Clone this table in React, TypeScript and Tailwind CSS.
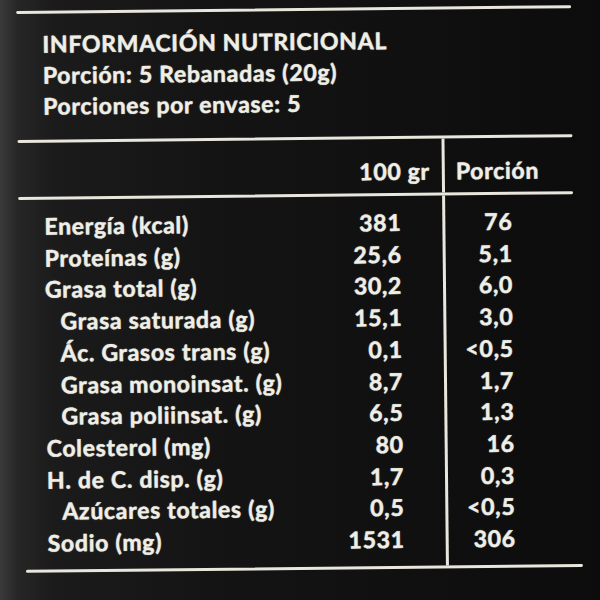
const rows: { label: string; a: string; b: string; sub?: boolean }[] = [
  { label: "Energía (kcal)", a: "381", b: "76" },
  { label: "Proteínas (g)", a: "25,6", b: "5,1" },
  { label: "Grasa total (g)", a: "30,2", b: "6,0" },
  { label: "Grasa saturada (g)", a: "15,1", b: "3,0", sub: true },
  { label: "Ác. Grasos trans (g)", a: "0,1", b: "<0,5", sub: true },
  { label: "Grasa monoinsat. (g)", a: "8,7", b: "1,7", sub: true },
  { label: "Grasa poliinsat. (g)", a: "6,5", b: "1,3", sub: true },
  { label: "Colesterol (mg)", a: "80", b: "16" },
  { label: "H. de C. disp. (g)", a: "1,7", b: "0,3" },
  { label: "Azúcares totales (g)", a: "0,5", b: "<0,5", sub: true },
  { label: "Sodio (mg)", a: "1531", b: "306" },
];

function Rule({ className = "" }: { className?: string }) {
  return <div className={`h-[3px] rounded-full bg-[#e9e7dd] ${className}`} />;
}

export default function App() {
  return (
    <div className="h-[600px] w-[600px] overflow-hidden bg-[linear-gradient(90deg,#3a3a3a_0%,#262626_3%,#1b1b1b_9%,#141414_35%,#0c0c0c_100%)] font-['Lato','Noto_Sans',sans-serif] font-bold tracking-[0.7px] text-[#f0efe7] [-webkit-text-stroke:0.4px_#f0efe7] [text-shadow:0_0_1.5px_rgba(255,255,240,0.45)]">
      {/* the label is photographed slightly tilted */}
      <div className="rotate-[-0.6deg] pl-[19px] pr-[26px] pt-[8px]">
        <Rule />

        <div className="pl-[26px] pt-[15px] text-[23px] leading-[31px]">
          <div>INFORMACIÓN NUTRICIONAL</div>
          <div>Porción: 5 Rebanadas (20g)</div>
          <div>Porciones por envase: 5</div>
        </div>

        <div className="mt-[18px]">
          <Rule />
          <div className="flex text-[23px] leading-[31px]">
            <div className="w-[424px] pb-[6px] pr-[12px] pt-[17px] text-right">100 gr</div>
            <div className="w-[3px] bg-[#e9e7dd]" />
            <div className="pl-[11px] pt-[17px]">Porción</div>
          </div>
          <Rule />

          <div className="flex">
            <div className="w-[424px] pb-[10px] pt-[11px] text-[23px] leading-[31.7px]">
              {rows.map((r) => (
                <div key={r.label} className="flex justify-between pr-[41px]">
                  <span className={r.sub ? "pl-[41px]" : "pl-[26px]"}>{r.label}</span>
                  <span>{r.a}</span>
                </div>
              ))}
            </div>
            <div className="w-[3px] bg-[#e9e7dd]" />
            <div className="w-[67px] pb-[10px] pt-[11px] text-right text-[23px] leading-[31.7px]">
              {rows.map((r) => (
                <div key={r.label}>{r.b}</div>
              ))}
            </div>
          </div>
          <Rule className="-mr-[6px] ml-[4px]" />
        </div>
      </div>
    </div>
  );
}
